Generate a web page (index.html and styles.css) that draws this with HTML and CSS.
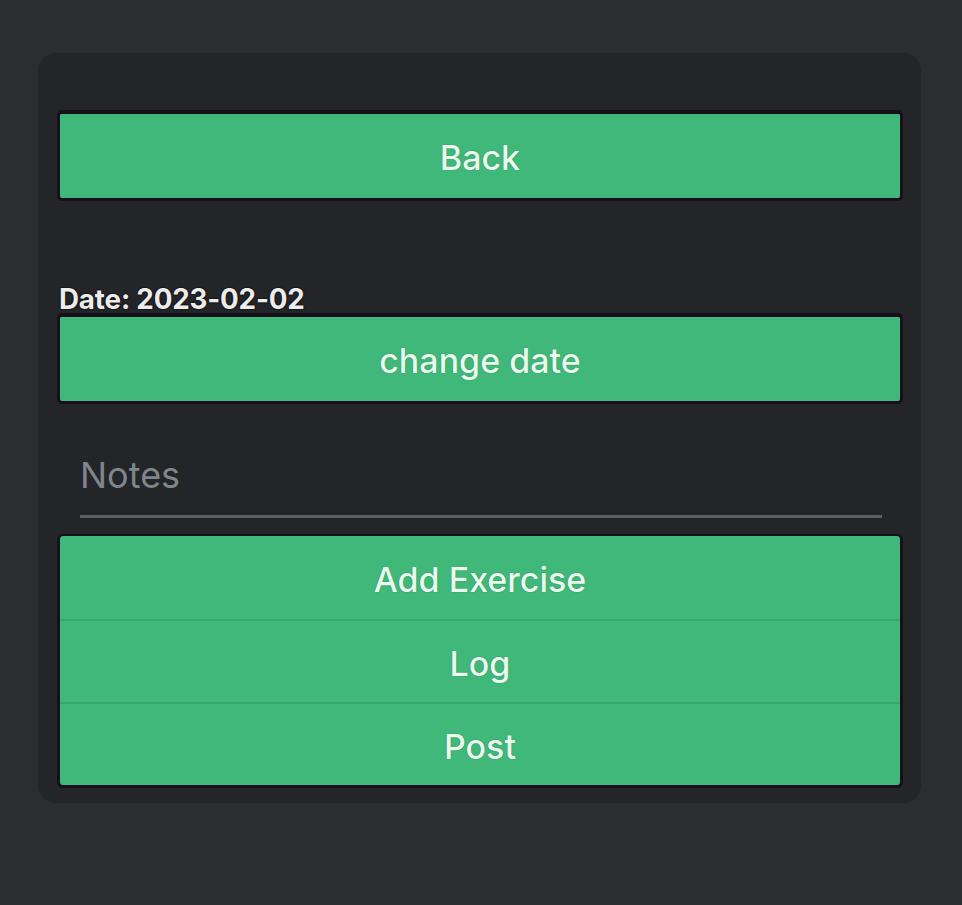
FILE: index.html
```html
<!DOCTYPE html>
<html>
<head>
<meta charset="utf-8">
<link rel="stylesheet" href="styles.css">
</head>
<body>
<div class="card">
  <div class="header"></div>
  <button class="btn single">Back</button>
  <div class="date">Date: 2023-02-02</div>
  <button class="btn single">change date</button>
  <div class="notes">
    <div class="notes-input">Notes</div>
  </div>
  <div class="stack">
    <button class="btn">Add Exercise</button>
    <button class="btn sep">Log</button>
    <button class="btn sep">Post</button>
  </div>
</div>
</body>
</html>
```

FILE: styles.css
```css
html, body {
  margin: 0;
  padding: 0;
  background: #2c2d30;
  width: 962px;
  height: 905px;
  overflow: hidden;
}
body {
  font-family: Inter, "Liberation Sans", sans-serif;
}
.card {
  margin: 53px 0 0 38px;
  width: 883px;
  height: 750px;
  box-sizing: border-box;
  background: #242528;
  border-radius: 18px;
  padding: 0 18px 0 19px;
  display: flex;
  flex-direction: column;
}
.header {
  height: 57px;
  flex: none;
}
.btn {
  display: block;
  width: 100%;
  font-family: Inter, "Liberation Sans", sans-serif;
  font-size: 34px;
  font-weight: 500;
  color: #e8fbee;
  background: #40b87a;
  border: none;
  margin: 0;
  padding: 3px 0 0 0;
  height: 84px;
  text-shadow: 0 0 1px rgba(20, 60, 30, 0.6);
}
.single {
  height: 91px;
  border: 3px solid #170f1b;
  border-top-width: 4px;
  border-radius: 5px;
}
.date {
  margin-top: 84px;
  height: 28px;
  line-height: 28px;
  font-size: 27.8px;
  font-weight: 700;
  color: #ececec;
  padding-left: 2px;
  letter-spacing: -0.2px;
  text-shadow: 0 0 2px #000, 0 0 1px #000;
}
.notes {
  padding: 0 21px 0 23px;
  height: 130px;
  box-sizing: border-box;
  padding-top: 51px;
}
.notes-input {
  font-size: 36px;
  line-height: 40px;
  color: #7f858d;
  height: 60px;
  border-bottom: 3px solid #5a5f66;
  padding-left: 0;
}
.stack {
  border: 3px solid #170f1b;
  border-top-width: 2px;
  border-radius: 6px;
  overflow: hidden;
  display: flex;
  flex-direction: column;
}
.stack .btn {
  height: 83px;
}
.stack .sep {
  border-top: 2px solid #38a76c;
  height: 83px;
}
```
